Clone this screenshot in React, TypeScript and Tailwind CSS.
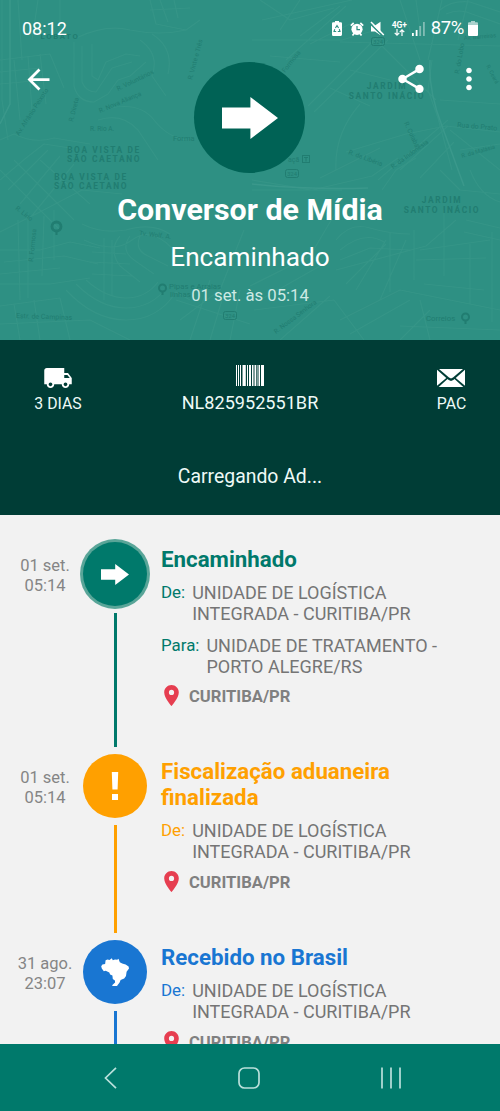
import type { ReactNode } from 'react';
import {
  MdArrowBack,
  MdLocalShipping,
  MdLocationOn,
  MdMoreVert,
  MdShare,
} from 'react-icons/md';

type TrackingEvent = {
  title: string;
  date: string;
  time: string;
  details: { label: string; lines: string[] }[];
  place: string;
  icon: ReactNode;
  text: string;
  bg: string;
  height: string;
  active?: boolean;
};

const arrowPath = 'M0 5.2h14.200V0L28 10.500 14.200 21v-5.200H0z';

const events: TrackingEvent[] = [
  {
    title: 'Encaminhado',
    date: '01 set.',
    time: '05:14',
    details: [
      { label: 'De:', lines: ['UNIDADE DE LOGÍSTICA', 'INTEGRADA - CURITIBA/PR'] },
      { label: 'Para:', lines: ['UNIDADE DE TRATAMENTO -', 'PORTO ALEGRE/RS'] },
    ],
    place: 'CURITIBA/PR',
    icon: (
      <svg width="28" height="21" viewBox="0 0 28 21" fill="#fff">
        <path d={arrowPath} />
      </svg>
    ),
    text: 'text-[#00796b]',
    bg: 'bg-[#00796b]',
    height: 'h-[212px]',
    active: true,
  },
  {
    title: 'Fiscalização aduaneira finalizada',
    date: '01 set.',
    time: '05:14',
    details: [{ label: 'De:', lines: ['UNIDADE DE LOGÍSTICA', 'INTEGRADA - CURITIBA/PR'] }],
    place: 'CURITIBA/PR',
    icon: (
      <svg width="8" height="28" viewBox="0 0 8 28" fill="#fff">
        <path d="M.8 0h6.4l-.6 17.5H1.4zM1 22h6v6H1z" />
      </svg>
    ),
    text: 'text-[#ffa000]',
    bg: 'bg-[#ffa000]',
    height: 'h-[186px]',
  },
  {
    title: 'Recebido no Brasil',
    date: '31 ago.',
    time: '23:07',
    details: [{ label: 'De:', lines: ['UNIDADE DE LOGÍSTICA', 'INTEGRADA - CURITIBA/PR'] }],
    place: 'CURITIBA/PR',
    icon: (
      <svg width="28" height="28" viewBox="0 0 28 28" fill="#fff">
        <path d="M6.500 1.500 8.500 2 10.800.3l1 1.900L14 1.500l2.200.3L17.500.8l1.300 3.400 2.400 1.300 3.400.9 3 2 .4 2-2.400 3.300-.6 4.300-1.800 2.500-3.600 1.400-1 2.700-2.300 2.800-.5 2-1.800.9-2.800-1.600.2-1.600 2.700-2.600-.2-2-2.100-1.600-.4-3.400-2.300-1.100-.8-2-3.600-1.600-1.900.5L.8 10.600.2 8.300l1.200-1.700 2.700-.5.5-3.800z" />
      </svg>
    ),
    text: 'text-[#1976d2]',
    bg: 'bg-[#1976d2]',
    height: 'h-[186px]',
  },
];

export default function App() {
  return (
    <main className="flex h-[1111px] w-[500px] flex-col overflow-hidden bg-[#f2f2f2] font-['Roboto',sans-serif]">
      <Header />
      <Summary />
      <section className="min-h-0 flex-1 overflow-hidden pt-[27px]">
        {events.map((event) => (
          <EventRow key={event.title} event={event} />
        ))}
      </section>
      <NavBar />
    </main>
  );
}

function Header() {
  return (
    <header className="relative h-[340px] shrink-0 overflow-hidden bg-[#2e9083] text-white">
      <MapBackdrop />
      <div className="relative flex flex-col">
        <StatusBar />

        {/* Toolbar */}
        <div className="flex items-start pt-[5px]">
          <div className="w-[194px] pt-px pl-[22px]">
            <MdArrowBack size={33} />
          </div>
          <div className="flex size-[111px] items-center justify-center rounded-full bg-[#006255]">
            <svg width="56" height="42" viewBox="0 0 28 21" fill="#fff">
              <path d={arrowPath} />
            </svg>
          </div>
          <div className="flex w-[195px] items-center justify-end gap-6 pr-[14px]">
            <MdShare size={34} />
            <MdMoreVert size={34} />
          </div>
        </div>

        <div className="flex flex-col items-center">
          <h1 className="mt-[17px] text-[30.4px] leading-10 font-bold">Conversor de Mídia</h1>
          <p className="mt-[11px] text-[26.2px] leading-8">Encaminhado</p>
          <p className="mt-[11px] text-[16.7px] leading-6 text-[#cdeae5]">01 set. às 05:14</p>
        </div>
      </div>
    </header>
  );
}

function StatusBar() {
  return (
    <div className="flex h-[57px] items-center justify-between pr-[22px] pl-[22px]">
      <span className="text-[18px]">08:12</span>
      <div className="flex items-center">
        {/* Battery saver */}
        <svg width="10" height="15" viewBox="0 0 10 15">
          <path d="M3 0h4v1.3h1.8Q10 1.3 10 2.6v11Q10 15 8.8 15H1.2Q0 15 0 13.7V2.6Q0 1.3 1.2 1.3H3z" fill="#fff" />
          <path d="M3.4 7 5 4.600 6.600 7M7.300 8.200 8 10.500H5.800M4.200 10.500H2L2.800 8.200" fill="none" stroke="#2e9083" strokeWidth="1.100" />
        </svg>

        {/* Alarm */}
        <svg className="ml-[8px]" width="14" height="14" viewBox="0 0 14 14">
          <path d="M.8 3.600 3.700 1M13.200 3.600 10.300 1M2.500 13.400l1.500-2M11.500 13.400l-1.500-2" stroke="#fff" strokeWidth="1.700" />
          <circle cx="7" cy="7.300" r="5.600" fill="#fff" />
          <path d="M7 4v3.700h3" fill="none" stroke="#2e9083" strokeWidth="1.200" />
        </svg>

        {/* Muted */}
        <svg className="ml-[6px]" width="15" height="15" viewBox="0 0 15 15">
          <path d="M1 4.500h4L10.500.8v13.400L5 10.500H1z" fill="#fff" />
          <path d="m0 2.500 12.500 12.300" stroke="#2e9083" strokeWidth="1.500" />
          <path d="m1 1 12.800 13" stroke="#fff" strokeWidth="1.500" />
        </svg>

        {/* Mobile data */}
        <div className="ml-[6px] flex w-[17px] flex-col items-center">
          <span className="text-[8.5px] leading-[8px] font-bold">4G+</span>
          <svg width="11" height="7" viewBox="0 0 11 7" fill="none" stroke="#fff" strokeWidth="1.200">
            <path d="M3 0v6M.7 3.800 3 6.100l2.300-2.300M8 7V1M5.700 3.200 8 .9l2.300 2.300" />
          </svg>
        </div>

        {/* Signal */}
        <svg className="ml-[4px]" width="13" height="14" viewBox="0 0 13 14" fill="#fff">
          <path d="M0 11h1.800v3H0zM3.700 8h1.800v6H3.700z" />
          <path d="M7.300 4h1.800v10H7.300zM11 0h1.800v14H11z" opacity=".4" />
        </svg>

        <span className="ml-[6px] text-[18.5px] tracking-[-0.4px]">87%</span>

        <svg className="ml-[4px]" width="10" height="15" viewBox="0 0 10 15" fill="#fff">
          <path d="M3 0h4v1.300h2Q10 1.300 10 2.600v1.200H0V2.600Q0 1.300 1 1.300h2z" opacity=".6" />
          <path d="M0 3.800h10v10Q10 15 9 15H1q-1 0-1-1.200z" />
        </svg>
      </div>
    </div>
  );
}

// Faded street map behind the header
function MapBackdrop() {
  return (
    <svg className="absolute inset-0" width="500" height="340" viewBox="0 0 500 340">
      <g fill="none" stroke="#389789" strokeWidth="1.200" strokeLinejoin="round" opacity=".75">
        <path d="M2 0v100l6 40M18 0l4 60M38 0l-6 40M60 0v30M0 60l50-6 14 34M0 72l40-4M0 84l44-4M14 60l6 60M28 56l4 54M40 54l6 50" />
        <path d="M74 42v44q4 16 20 16l14-8 10-14 12-4 16-14M82 46v36q4 10 14 10l8-12 8-12 20-6M92 44v32l6 4 8-18 20-8 14 2M76 38q30-14 54-8 30 6 56 0l14-10" />
        <path d="M140 40q20 14 12 36l14 20M152 34q22 14 16 40M150 0l6 24 30 6M160 0l8 22M174 0l4 18M150 10l40-2M110 108q30-6 44 12t34 20M98 120q24-8 40 10l20 30" />
        <path d="M0 140l14-6q20 10 40 4l36 6M0 180l26-22 18-14 26 4M8 190l40-40M20 204l40-48M30 218l44-54M0 170l60 60M14 160l60 60M40 160l50 44M0 232l36-18 46-24 40 4" />
        <path d="M0 250h40l30-8 30 6M4 262l60-6 34 8M0 274l60-6M0 284h50l40-6M18 220l2 80M28 214v84M44 216l-2 60M54 210v50" />
        <path d="M82 224q20 10 44 6 26-8 44 4M84 240q30 14 48 0t40 8M120 236q-12 14 0 30l20 16M130 236q-10 14 4 24l20 14M140 236q-6 14 8 20l20 10M104 238v62M112 240v56M92 252l34 2M90 262l40 2M92 274l40 2" />
        <path d="M66 290q28 30 60 30t50-28l14 8M76 284q24 24 50 24t42-22M86 280q20 18 40 18t32-16M0 306l60-8 10 42M14 304l6 36M34 300l6 40M0 324l90-4 40 20" />
        <path d="M180 320l40-30 24-60M190 340l20-60M210 340l12-40M230 340l10-50M176 300l74 24" />
        <path d="M260 0l30 20 44-12M262 20l90-20M280 30l20-30M300 36l40-30M310 44l40-20M252 40h90l34-10M270 56l70 6M286 60l60-54" />
        <path d="M308 106l70-70M314 112l74-72M330 88l40 18M350 70l40 10M360 104q-26 30-24 66M346 152l60-18 40-8 54 6M432 60l-4 30 10 28 14 52M442 0l-14 60M416 0l4 30M468 0l-10 40M340 42l160 4M376 40l60 60" />
        <path d="M440 10q12-10 30-8l30 10M446 14q14-6 26 0l28 10M440 100l60 4M448 120l-70 60M400 170l48-44M420 178l34-36M450 130l50 40M460 150l40-6M400 0l20 60" />
        <path d="M252 180l60 10 60-14 26-18M252 190h90M320 178l60-30M382 190l14-20 20-12M470 170q10 26 30 32M440 170l20 20 40 4" />
        <path d="M336 240q14-18 34-12t40 6M340 250q24-20 44-8M340 260l30-12 40 2M336 270l90-24 30-26M346 284l40-40M356 290l30-50M380 300l26-60M390 232v60M414 230v50M444 210v66" />
        <path d="M420 250l70-10M416 260l70-2M424 284l60 6M466 220l34 8M464 232l36 8M470 244v60M492 232v90M250 286l60-30 26-44M260 300l60-34M254 310l80-10 30 40M280 340l50-44" />
        <path d="M340 320l60-30 100 20M350 334l60-34M400 340l30-30M420 300l10 40M400 326l100 4" />
      </g>
      <g fill="none" stroke="#3a988b" strokeWidth="1.500">
        <path d="M0 124l10-20V0M430 60q-2 30 12 66l22 60M252 184q60 6 116 4" />
      </g>
      <g fill="#217d71" fontSize="6.500">
        <g fontWeight="700" letterSpacing="1.600" textAnchor="middle" fontSize="8.400">
          <text x="60" y="39" fontSize="7.800">LOBATO</text>
          <text x="104" y="153">BOA VISTA DE</text>
          <text x="104" y="162">SÃO CAETANO</text>
          <text x="91" y="180">BOA VISTA DE</text>
          <text x="91" y="189">SÃO CAETANO</text>
          <text x="387" y="89">JARDIM</text>
          <text x="387" y="98.500">SANTO INÁCIO</text>
          <text x="442" y="203">JARDIM</text>
          <text x="442" y="212.500">SANTO INÁCIO</text>
        </g>
        <text transform="translate(19 136) rotate(-57)">Av. Afrânio Peixoto</text>
        <text transform="translate(118 91) rotate(-26)">R. Voluntários</text>
        <text transform="translate(100 113) rotate(-23)">R. Nova Aliança</text>
        <text x="90" y="131">R. Rio A.</text>
        <text transform="translate(73 122) rotate(-76)">R. Direta</text>
        <text transform="translate(192 80) rotate(-75)">R. Vinte e Três</text>
        <text x="173" y="141" fontSize="7.500">Forma</text>
        <text transform="translate(285 73) rotate(-52)">Formosa</text>
        <text transform="translate(404 123) rotate(65)">R. Cuiabá</text>
        <text transform="translate(457 127) rotate(5)" fontSize="7">Rua do Prato</text>
        <text transform="translate(393 169) rotate(-36)">R. da Indonésia</text>
        <text transform="translate(348 154) rotate(20)">R. da Libéria</text>
        <text transform="translate(462 158) rotate(-16)" fontSize="5.800">R. da Malásia</text>
        <text transform="translate(464 40) rotate(-5)" fontSize="5.800">Av. Barreiras</text>
        <text transform="translate(459 74) rotate(-80)">R. do Lobo</text>
        <text transform="translate(486 66) rotate(62)" fontSize="5.500">R. Ceará</text>
        <text transform="translate(15 209) rotate(38)">R. Lírio</text>
        <text transform="translate(33 262) rotate(-84)">R. Formosa</text>
        <text transform="translate(139 235) rotate(7)">Tv. Wolf. A.</text>
        <text transform="translate(16 318) rotate(2)" fontSize="7">Estr. de Campinas</text>
        <text x="169" y="289" fontSize="7.800">Pipas e Arraias</text>
        <text x="170" y="297" fontSize="7.800">linhas</text>
        <text transform="translate(276 334) rotate(-37)">R. Nossa Senhora</text>
        <text x="426" y="321" fontSize="7.800">Correios</text>
        <g fontSize="6" textAnchor="middle">
          <text x="378" y="44">324</text>
          <text x="292" y="176">324</text>
          <text x="230" y="318">324</text>
        </g>
        <text x="288" y="162" fontSize="7">açã</text>
      </g>
      <g fill="none" stroke="#217d71">
        <rect x="371.500" y="37.500" width="13" height="8" rx="2" />
        <rect x="285.500" y="169.500" width="13" height="8" rx="2" />
        <rect x="223.500" y="311.500" width="13" height="8" rx="2" />
        <rect x="302.500" y="155.500" width="7" height="7" />
        <path d="M304 157.500h4M306 157.500v4" />
        <g strokeWidth="2.800">
          <circle cx="56.500" cy="226.500" r="4.500" />
          <circle cx="162.500" cy="288" r="3.500" strokeWidth="2" />
          <circle cx="465.500" cy="317" r="3.500" strokeWidth="2" />
        </g>
        <path d="M56.500 231v4M162.500 292v3M465.500 321v3" strokeWidth="2" />
      </g>
    </svg>
  );
}

function Summary() {
  return (
    <section className="flex h-[175px] shrink-0 flex-col bg-[#003d36] text-[#eefaf7]">
      <div className="flex justify-between pt-[23px]">
        <div className="flex w-[116px] flex-col items-center">
          <MdLocalShipping size={30} className="text-white" />
          <span className="text-[15.8px] leading-[22px]">3 DIAS</span>
        </div>
        <div className="flex flex-col items-center">
          <svg className="mt-[2px]" width="28" height="21" viewBox="0 0 28 21" fill="#fff">
            <path d="M0 0h1v21H0zM2 0h1v21H2zM4 0h1v21H4zM6.500 0h3.300v21H6.500zM11 0h1v21h-1zM13 0h2v21h-2zM16 0h1.500v21H16zM18.500 0h1.800v21h-1.800zM21.500 0h1v21h-1zM23 0h1v21h-1zM25 0h3v21h-3z" />
          </svg>
          <span className="mt-[5px] text-[18.1px] leading-6">NL825952551BR</span>
        </div>
        <div className="flex w-[116px] flex-col items-center pl-[19px]">
          <svg className="mt-[6px]" width="28" height="18" viewBox="0 0 28 18" fill="#fff">
            <path d="M2 0h24L16 8.600q-2 1.600-4 0zM0 .800 9.300 9 0 16.800zM28 .800 18.700 9l9.300 7.800zM1.700 18l8.800-7.900 1.200 1q2.300 1.600 4.600 0l1.200-1 8.800 7.900z" />
          </svg>
          <span className="mt-[6px] text-[15.8px] leading-[22px]">PAC</span>
        </div>
      </div>
      <p className="mt-[48px] text-center text-[19.4px] leading-7">Carregando Ad...</p>
    </section>
  );
}

function EventRow({ event }: { event: TrackingEvent }) {
  return (
    <article className={`flex ${event.height}`}>
      <div className="w-[83px] pt-[14px] pl-[7px] text-center text-[16.5px] leading-[19.5px] text-[#858585]">
        <p>{event.date}</p>
        <p>{event.time}</p>
      </div>

      {/* Marker and connector */}
      <div className="flex w-16 flex-col items-center">
        <div
          className={`flex size-16 shrink-0 items-center justify-center rounded-full ${event.bg} ${
            event.active ? 'ring-3 ring-[#59a598]' : ''
          }`}
        >
          {event.icon}
        </div>
        <div className={`my-[7px] ml-px w-[3px] flex-1 ${event.bg}`} />
      </div>

      <div className="ml-[14px] w-[290px] pt-[4px]">
        <h2 className={`w-[250px] text-[22.3px] leading-[26px] font-bold ${event.text}`}>{event.title}</h2>
        {event.details.map((detail) => (
          <div key={detail.label} className="mt-[10px] flex leading-[21.3px]">
            <span className={`mr-[7px] text-[16.9px] ${event.text}`}>{detail.label}</span>
            <div className="text-[18px] whitespace-nowrap text-[#757575]">
              {detail.lines.map((line) => (
                <p key={line}>{line}</p>
              ))}
            </div>
          </div>
        ))}
        <div className="mt-[6px] flex items-start">
          <MdLocationOn size={25} className="-ml-[2px] text-[#e63e50]" />
          <span className="ml-[5px] pt-[2px] text-[16.6px] font-bold text-[#808080]">{event.place}</span>
        </div>
      </div>
    </article>
  );
}

function NavBar() {
  return (
    <nav className="flex h-[67px] shrink-0 items-center justify-center gap-[121px] bg-[#00796b] pt-px pl-[5px]">
      <svg width="13" height="22" viewBox="0 0 13 22" fill="none" stroke="#b9e0db" strokeWidth="1.700">
        <path d="M12 .800 1.500 11 12 21.200" />
      </svg>
      <svg width="22" height="22" viewBox="0 0 22 22" fill="none" stroke="#b9e0db" strokeWidth="1.700">
        <rect x="1" y="1" width="20" height="20" rx="5.500" />
      </svg>
      <svg width="20" height="22" viewBox="0 0 20 22" fill="none" stroke="#b9e0db" strokeWidth="1.700">
        <path d="M1 .500v21M10 .500v21M19 .500v21" />
      </svg>
    </nav>
  );
}
